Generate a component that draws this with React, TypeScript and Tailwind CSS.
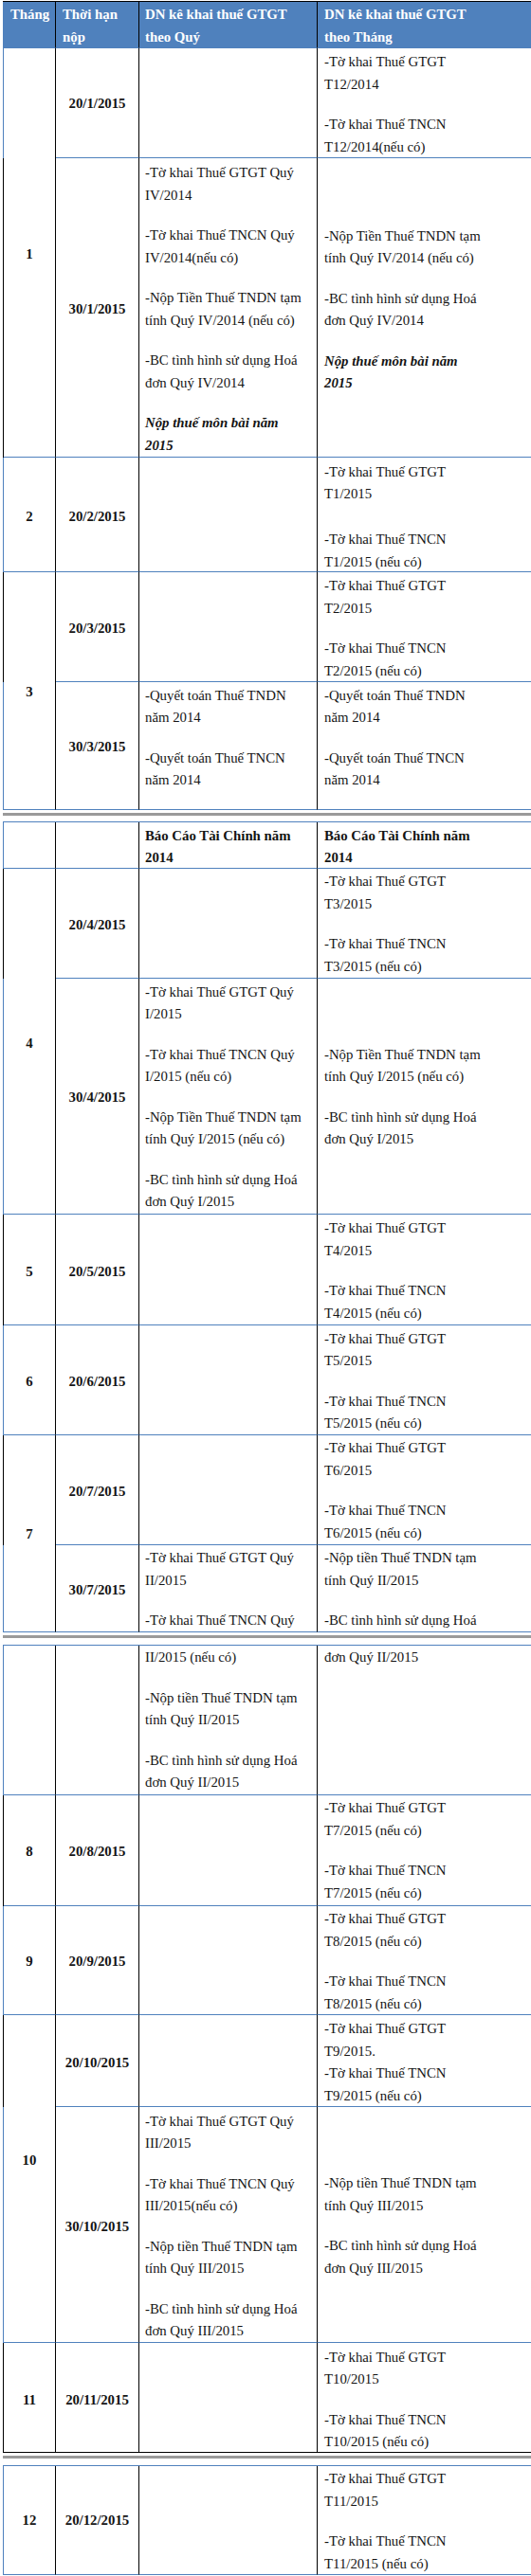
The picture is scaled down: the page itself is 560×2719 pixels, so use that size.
import React from "react";

type Para = { lines: string[]; style?: "bi" | "b" };
type Block = { pt: string; paras: Para[]; gap?: string };
type Cell = { text: string; pt: string; span?: string };
type Row = {
  left: string;
  bottom: string;
  month?: Cell | "empty";
  date?: Cell | "empty";
  c3?: Block;
  c4?: Block;
  header?: boolean;
};

const BLUE_BG = "bg-[#4f81bd]";
const BLACK_BG = "bg-black";
const B_BLUE = "border-b-[#4f81bd]";
const B_BLACK = "border-b-black";

const p = (...lines: string[]): Para => ({ lines });
const bi = (...lines: string[]): Para => ({ lines, style: "bi" });
const b = (...lines: string[]): Para => ({ lines, style: "b" });

function TextBlock({ block }: { block: Block }) {
  return (
    <div className={block.pt}>
      {block.paras.map((para, i) => (
        <div
          key={i}
          className={[
            i > 0 ? block.gap ?? "mt-[19px]" : "",
            para.style === "bi" ? "font-bold italic" : "",
            para.style === "b" ? "font-bold" : "",
          ].join(" ")}
        >
          {para.lines.map((l, j) => (
            <div key={j} className="whitespace-nowrap">
              {l}
            </div>
          ))}
        </div>
      ))}
    </div>
  );
}

function Segment({
  rows,
  rowsClass,
  topClass,
}: {
  rows: Row[];
  rowsClass: string;
  topClass: string;
}) {
  const items: React.ReactNode[] = [];
  rows.forEach((r, i) => {
    const hb = r.header ? "bg-[#4f81bd] text-white font-bold" : "";
    items.push(<div key={`l${i}`} className={`col-start-1 ${r.left}`} />);
    if (r.month) {
      if (r.month === "empty") {
        items.push(
          <div
            key={`m${i}`}
            className={`col-start-2 border-r border-b border-r-black ${r.bottom} ${hb}`}
          />
        );
      } else {
        items.push(
          <div
            key={`m${i}`}
            className={`col-start-2 border-r border-b border-r-black ${r.bottom} ${hb} ${r.month.span ?? ""} ${r.header ? "pl-[7px] text-left" : "text-center font-bold"} ${r.month.pt}`}
          >
            <div className="whitespace-nowrap">{r.month.text}</div>
          </div>
        );
      }
    }
    if (r.date) {
      if (r.date === "empty") {
        items.push(
          <div
            key={`d${i}`}
            className={`col-start-3 border-r border-b border-r-black ${r.bottom} ${hb}`}
          />
        );
      } else {
        items.push(
          <div
            key={`d${i}`}
            className={`col-start-3 border-r border-b border-r-black ${r.bottom} ${hb} ${r.header ? "pl-[7px] text-left" : "text-center font-bold"} ${r.date.pt}`}
          >
            {r.date.text.split("\n").map((t, j) => (
              <div key={j} className="whitespace-nowrap">
                {t}
              </div>
            ))}
          </div>
        );
      }
    }
    items.push(
      <div
        key={`c3${i}`}
        className={`col-start-4 border-r border-b border-r-black ${r.bottom} ${hb} pl-[6px]`}
      >
        {r.c3 && <TextBlock block={r.c3} />}
      </div>
    );
    items.push(
      <div
        key={`c4${i}`}
        className={`col-start-5 border-b ${r.bottom} ${hb} pl-[7px]`}
      >
        {r.c4 && <TextBlock block={r.c4} />}
      </div>
    );
  });
  return (
    <div
      className={`grid w-[640px] grid-cols-[1px_55px_88px_188px_1fr] border-t ${topClass} ${rowsClass}`}
    >
      {items}
    </div>
  );
}

const seg1: Row[] = [
  {
    header: true,
    left: BLUE_BG,
    bottom: B_BLUE,
    month: { text: "Tháng", pt: "pt-[2.1px]" },
    date: { text: "Thời hạn\nnộp", pt: "pt-[2.1px]" },
    c3: { pt: "pt-[2.1px]", paras: [p("DN kê khai thuế GTGT", "theo Quý")] },
    c4: { pt: "pt-[2.1px]", paras: [p("DN kê khai thuế GTGT", "theo Tháng")] },
  },
  {
    left: BLUE_BG,
    bottom: B_BLUE,
    month: { text: "1", pt: "pt-[206.4px]", span: "row-span-2" },
    date: { text: "20/1/2015", pt: "pt-[47.4px]" },
    c4: {
      pt: "pt-[3.4px]",
      paras: [p("-Tờ khai Thuế GTGT", "T12/2014"), p("-Tờ khai Thuế TNCN", "T12/2014(nếu  có)")],
    },
  },
  {
    left: BLACK_BG,
    bottom: B_BLUE,
    date: { text: "30/1/2015", pt: "pt-[148px]" },
    c3: {
      pt: "pt-[4.1px]",
      paras: [
        p("-Tờ khai Thuế GTGT Quý", "IV/2014"),
        p("-Tờ khai Thuế TNCN Quý", "IV/2014(nếu có)"),
        p("-Nộp Tiền Thuế TNDN tạm", "tính Quý IV/2014 (nếu có)"),
        p("-BC tình hình sử dụng Hoá", "đơn Quý IV/2014"),
        bi("Nộp thuế môn bài năm", "2015"),
      ],
    },
    c4: {
      pt: "pt-[70.7px]",
      paras: [
        p("-Nộp Tiền Thuế TNDN tạm", "tính Quý IV/2014 (nếu có)"),
        p("-BC tình hình sử dụng Hoá", "đơn Quý IV/2014"),
        bi("Nộp thuế môn bài năm", "2015"),
      ],
    },
  },
  {
    left: BLUE_BG,
    bottom: B_BLUE,
    month: { text: "2", pt: "pt-[51.4px]" },
    date: { text: "20/2/2015", pt: "pt-[51.4px]" },
    c4: {
      pt: "pt-[3.7px]",
      gap: "mt-[24.5px]",
      paras: [p("-Tờ khai Thuế GTGT", "T1/2015"), p("-Tờ khai Thuế TNCN", "T1/2015 (nếu có)")],
    },
  },
  {
    left: BLACK_BG,
    bottom: B_BLUE,
    month: { text: "3", pt: "pt-[115.4px]", span: "row-span-2" },
    date: { text: "20/3/2015", pt: "pt-[48.4px]" },
    c4: {
      pt: "pt-[3.4px]",
      paras: [p("-Tờ khai Thuế GTGT", "T2/2015"), p("-Tờ khai Thuế TNCN", "T2/2015 (nếu có)")],
    },
  },
  {
    left: BLUE_BG,
    bottom: B_BLUE,
    date: { text: "30/3/2015", pt: "pt-[57.4px]" },
    c3: {
      pt: "pt-[2.7px]",
      paras: [p("-Quyết toán Thuế TNDN", "năm 2014"), p("-Quyết toán Thuế TNCN", "năm 2014")],
    },
    c4: {
      pt: "pt-[2.7px]",
      paras: [p("-Quyết toán Thuế TNDN", "năm 2014"), p("-Quyết toán Thuế TNCN", "năm 2014")],
    },
  },
];

const seg2: Row[] = [
  {
    left: BLUE_BG,
    bottom: B_BLUE,
    month: "empty",
    date: "empty",
    c3: { pt: "pt-[2.7px]", paras: [b("Báo Cáo Tài Chính năm", "2014")] },
    c4: { pt: "pt-[2.7px]", paras: [b("Báo Cáo Tài Chính năm", "2014")] },
  },
  {
    left: BLACK_BG,
    bottom: B_BLUE,
    month: { text: "4", pt: "pt-[173.1px]", span: "row-span-2" },
    date: { text: "20/4/2015", pt: "pt-[48.1px]" },
    c4: {
      pt: "pt-[2.1px]",
      paras: [p("-Tờ khai Thuế GTGT", "T3/2015"), p("-Tờ khai Thuế TNCN", "T3/2015 (nếu có)")],
    },
  },
  {
    left: BLUE_BG,
    bottom: B_BLUE,
    date: { text: "30/4/2015", pt: "pt-[114.4px]" },
    c3: {
      pt: "pt-[2.7px]",
      paras: [
        p("-Tờ khai Thuế GTGT Quý", "I/2015"),
        p("-Tờ khai Thuế TNCN Quý", "I/2015 (nếu có)"),
        p("-Nộp Tiền Thuế TNDN tạm", "tính Quý I/2015 (nếu có)"),
        p("-BC tình hình sử dụng Hoá", "đơn Quý I/2015"),
      ],
    },
    c4: {
      pt: "pt-[68.7px]",
      paras: [
        p("-Nộp Tiền Thuế TNDN tạm", "tính Quý I/2015 (nếu có)"),
        p("-BC tình hình sử dụng Hoá", "đơn Quý I/2015"),
      ],
    },
  },
  {
    left: BLACK_BG,
    bottom: B_BLUE,
    month: { text: "5", pt: "pt-[49.1px]" },
    date: { text: "20/5/2015", pt: "pt-[49.1px]" },
    c4: {
      pt: "pt-[3.1px]",
      paras: [p("-Tờ khai Thuế GTGT", "T4/2015"), p("-Tờ khai Thuế TNCN", "T4/2015 (nếu có)")],
    },
  },
  {
    left: BLUE_BG,
    bottom: B_BLUE,
    month: { text: "6", pt: "pt-[47.7px]" },
    date: { text: "20/6/2015", pt: "pt-[47.7px]" },
    c4: {
      pt: "pt-[2.7px]",
      paras: [p("-Tờ khai Thuế GTGT", "T5/2015"), p("-Tờ khai Thuế TNCN", "T5/2015 (nếu có)")],
    },
  },
  {
    left: BLACK_BG,
    bottom: B_BLUE,
    month: { text: "7", pt: "pt-[93.4px]", span: "row-span-2" },
    date: { text: "20/7/2015", pt: "pt-[47.7px]" },
    c4: {
      pt: "pt-[2.4px]",
      paras: [p("-Tờ khai Thuế GTGT", "T6/2015"), p("-Tờ khai Thuế TNCN", "T6/2015 (nếu có)")],
    },
  },
  {
    left: BLUE_BG,
    bottom: B_BLUE,
    date: { text: "30/7/2015", pt: "pt-[35.7px]" },
    c3: {
      pt: "pt-[2.4px]",
      paras: [p("-Tờ khai Thuế GTGT Quý", "II/2015"), p("-Tờ khai Thuế TNCN Quý")],
    },
    c4: {
      pt: "pt-[2.4px]",
      paras: [p("-Nộp tiền Thuế TNDN tạm", "tính Quý II/2015"), p("-BC tình hình sử dụng Hoá")],
    },
  },
];

const seg3: Row[] = [
  {
    left: BLUE_BG,
    bottom: B_BLUE,
    month: "empty",
    date: "empty",
    c3: {
      pt: "pt-[1.4px]",
      paras: [
        p("II/2015 (nếu có)"),
        p("-Nộp tiền Thuế TNDN tạm", "tính Quý II/2015"),
        p("-BC tình hình sử dụng Hoá", "đơn Quý II/2015"),
      ],
    },
    c4: { pt: "pt-[1.4px]", paras: [p("đơn Quý II/2015")] },
  },
  {
    left: BLACK_BG,
    bottom: B_BLUE,
    month: { text: "8", pt: "pt-[47.7px]" },
    date: { text: "20/8/2015", pt: "pt-[47.7px]" },
    c4: {
      pt: "pt-[2.4px]",
      paras: [p("-Tờ khai Thuế GTGT", "T7/2015 (nếu có)"), p("-Tờ khai Thuế TNCN", "T7/2015 (nếu có)")],
    },
  },
  {
    left: BLUE_BG,
    bottom: B_BLUE,
    month: { text: "9", pt: "pt-[47.1px]" },
    date: { text: "20/9/2015", pt: "pt-[47.1px]" },
    c4: {
      pt: "pt-[2.2px]",
      paras: [p("-Tờ khai Thuế GTGT", "T8/2015 (nếu có)"), p("-Tờ khai Thuế TNCN", "T8/2015 (nếu có)")],
    },
  },
  {
    left: BLACK_BG,
    bottom: B_BLUE,
    month: { text: "10", pt: "pt-[142.1px]", span: "row-span-2" },
    date: { text: "20/10/2015", pt: "pt-[39.1px]" },
    c4: {
      pt: "pt-[3.4px]",
      paras: [p("-Tờ khai Thuế GTGT", "T9/2015.", "-Tờ khai Thuế TNCN", "T9/2015 (nếu có)")],
    },
  },
  {
    left: BLUE_BG,
    bottom: B_BLUE,
    date: { text: "30/10/2015", pt: "pt-[115.4px]" },
    c3: {
      pt: "pt-[3.7px]",
      paras: [
        p("-Tờ khai Thuế GTGT Quý", "III/2015"),
        p("-Tờ khai Thuế TNCN Quý", "III/2015(nếu có)"),
        p("-Nộp tiền Thuế TNDN tạm", "tính Quý III/2015"),
        p("-BC tình hình sử dụng Hoá", "đơn Quý III/2015"),
      ],
    },
    c4: {
      pt: "pt-[69.4px]",
      paras: [
        p("-Nộp tiền Thuế TNDN tạm", "tính Quý III/2015"),
        p("-BC tình hình sử dụng Hoá", "đơn Quý III/2015"),
      ],
    },
  },
  {
    left: BLACK_BG,
    bottom: B_BLACK,
    month: { text: "11", pt: "pt-[49.4px]" },
    date: { text: "20/11/2015", pt: "pt-[49.4px]" },
    c4: {
      pt: "pt-[3.7px]",
      paras: [p("-Tờ khai Thuế GTGT", "T10/2015"), p("-Tờ khai Thuế TNCN", "T10/2015 (nếu có)")],
    },
  },
];

const seg4: Row[] = [
  {
    left: BLUE_BG,
    bottom: B_BLUE,
    month: { text: "12", pt: "pt-[46.4px]" },
    date: { text: "20/12/2015", pt: "pt-[46.4px]" },
    c4: {
      pt: "pt-[2.1px]",
      paras: [p("-Tờ khai Thuế GTGT", "T11/2015"), p("-Tờ khai Thuế TNCN", "T11/2015 (nếu có)")],
    },
  },
];

function Separator({ h }: { h: string }) {
  return (
    <div className={`${h} flex flex-col pt-[3px]`}>
      <div className="h-[3px] w-full bg-[#9a9a9a]" />
    </div>
  );
}

export default function App() {
  return (
    <div className="w-[560px] h-[2719px] overflow-hidden bg-white pt-[1px] font-['Liberation_Serif','Times_New_Roman',serif] text-[14.8px] leading-[23.5px] text-[#141414]">
      <div className="ml-[3px] flex flex-col">
        <Segment
          rows={seg1}
          topClass="border-t-black"
          rowsClass="grid-rows-[49px_116px_316px_121px_116px_135px]"
        />
        <Separator h="h-[12px]" />
        <Segment
          rows={seg2}
          topClass="border-t-[#4f81bd]"
          rowsClass="grid-rows-[49px_116px_249px_117px_116px_116px_92px]"
        />
        <Separator h="h-[13px]" />
        <Segment
          rows={seg3}
          topClass="border-t-[#4f81bd]"
          rowsClass="grid-rows-[158px_117px_115px_97px_249px_116px]"
        />
        <Separator h="h-[13px]" />
        <Segment rows={seg4} topClass="border-t-[#4f81bd]" rowsClass="grid-rows-[115px]" />
      </div>
    </div>
  );
}
